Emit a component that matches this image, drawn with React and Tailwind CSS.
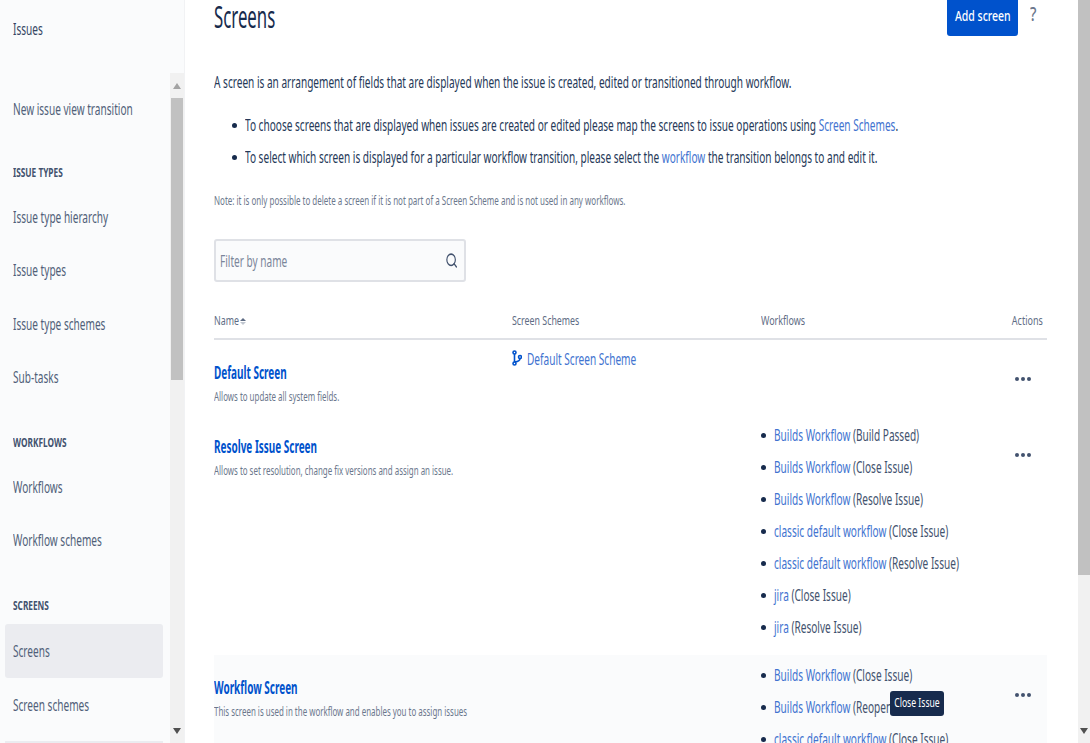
import { Search } from "lucide-react";

const FONT = "font-['Noto_Sans','Open_Sans',sans-serif]";
const COLS = "grid grid-cols-[298px_249px_minmax(0,1fr)_40px]";

// the reference text is tall and narrow, so every line is squeezed horizontally
function Squeezed({ children, className = "scale-x-[.63]" }) {
  return <span className={`inline-block origin-left whitespace-nowrap ${className}`}>{children}</span>;
}

function NavItem({ label, active, height = "h-[53.5px]" }) {
  return (
    <div className={`mx-[5px] w-[158px] px-2 flex items-center rounded-[3px] text-[16px] text-[#505f79] ${height} ${active ? "bg-[#ebecf0]" : ""}`}>
      <Squeezed>{label}</Squeezed>
    </div>
  );
}

function NavHeading({ label, className }) {
  return (
    <div className={`px-[13px] flex items-end text-[12px] font-bold leading-[18px] text-[#42526e] ${className}`}>
      <Squeezed className="scale-x-[.69]">{label}</Squeezed>
    </div>
  );
}

function Sidebar() {
  return (
    <aside className="w-[185px] shrink-0 h-full bg-[#fafbfc] border-r border-[#f1f2f4] flex flex-col">
      <div className="h-[73px] shrink-0 px-[13px] pt-[18px] text-[16px] leading-[22px] text-[#344563]">
        <Squeezed>Issues</Squeezed>
      </div>
      <div className="flex-1 min-h-0 flex">
        <div className="w-[170px] pt-[9px] overflow-hidden">
          <NavItem label="New issue view transition" height="h-[54px]" />
          <NavHeading label="ISSUE TYPES" className="h-[54px] pb-[8px]" />
          <NavItem label="Issue type hierarchy" />
          <NavItem label="Issue types" />
          <NavItem label="Issue type schemes" />
          <NavItem label="Sub-tasks" />
          <NavHeading label="WORKFLOWS" className="h-[56px] pb-[8px]" />
          <NavItem label="Workflows" />
          <NavItem label="Workflow schemes" />
          <NavHeading label="SCREENS" className="h-[57px] pb-[9px]" />
          <NavItem label="Screens" active height="h-[54px]" />
          <NavItem label="Screen schemes" height="h-[53px]" />
          <div className="mx-[5px] mt-[10px] h-[3px] w-[158px] bg-[#ebecf0]" />
        </div>
        <div className="w-[14px] shrink-0 bg-[#f1f1f1] flex flex-col items-center">
          <div className="h-[25px] shrink-0 flex items-center justify-center">
            <div className="w-0 h-0 border-x-[4px] border-x-transparent border-b-[6px] border-b-[#a3a3a3]" />
          </div>
          <div className="w-[12px] h-[282px] bg-[#c1c1c1]" />
          <div className="flex-1" />
          <div className="h-[25px] shrink-0 flex items-center justify-center">
            <div className="w-0 h-0 border-x-[4px] border-x-transparent border-t-[6px] border-t-[#505050]" />
          </div>
        </div>
      </div>
    </aside>
  );
}

function Link({ children }) {
  return <span className="text-[#4173d0]">{children}</span>;
}

function Bullet() {
  return <div className="w-[5px] h-[5px] rounded-full bg-[#172b4d] shrink-0" />;
}

function WorkflowItem({ name, transition }) {
  return (
    <div className="h-[32px] flex items-center gap-[8px] text-[16px] text-[#42526e]">
      <Bullet />
      <Squeezed>
        <Link>{name}</Link> ({transition})
      </Squeezed>
    </div>
  );
}

function RowDots() {
  return (
    <div className="flex gap-[2px] justify-end pr-[16px]">
      <div className="w-[4px] h-[4px] rounded-full bg-[#42526e]" />
      <div className="w-[4px] h-[4px] rounded-full bg-[#42526e]" />
      <div className="w-[4px] h-[4px] rounded-full bg-[#42526e]" />
    </div>
  );
}

function ScreenTitle({ title, desc }) {
  return (
    <>
      <div className="text-[17px] leading-[22px] font-bold text-[#0052cc]">
        <Squeezed className="scale-x-[.586]">{title}</Squeezed>
      </div>
      <div className="mt-[3px] text-[13px] leading-[18px] text-[#6b778c]">
        <Squeezed className="scale-x-[.61]">{desc}</Squeezed>
      </div>
    </>
  );
}

function SchemeIcon() {
  return (
    <svg width="10" height="16" viewBox="0 0 10 16" fill="none" stroke="#0052cc" strokeWidth="1.6">
      <circle cx="2.5" cy="2.5" r="1.5" />
      <circle cx="2.5" cy="13.5" r="1.5" />
      <circle cx="8" cy="7" r="1.5" />
      <path d="M2.5 4v8M8 8.5c0 2-2 3-5 3.5" />
    </svg>
  );
}

export default function App() {
  return (
    <div className={`relative flex h-[743px] w-[1090px] overflow-hidden bg-white ${FONT}`}>
      <Sidebar />

      <main className="relative flex-1 min-w-0 pl-[29px] pr-[31px] overflow-hidden">
        <div className="flex justify-between h-[36px]">
          <h1 className="text-[30px] leading-[34px] text-[#172b4d]">
            <Squeezed className="scale-x-[.56]">Screens</Squeezed>
          </h1>
          <div className="flex mr-[9px] gap-[12px]">
            <div className="w-[71px] h-[36px] pb-[5px] bg-[#0052cc] rounded-b-[3px] flex items-center justify-center text-[15px] font-medium text-white">
              <span className="inline-block scale-x-[.7] whitespace-nowrap">Add screen</span>
            </div>
            <div className="w-[8px] h-[28px] text-[20px] font-medium text-[#6b778c] flex items-center">
              <Squeezed className="scale-x-[.72]">?</Squeezed>
            </div>
          </div>
        </div>

        <p className="mt-[35px] h-[22px] text-[16px] leading-[22px] text-[#253858]">
          <Squeezed>A screen is an arrangement of fields that are displayed when the issue is created, edited or transitioned through workflow.</Squeezed>
        </p>

        <div className="mt-[16px] pl-[18px] text-[16px] text-[#253858]">
          <div className="h-[32px] flex items-center gap-[8px]">
            <Bullet />
            <Squeezed>
              To choose screens that are displayed when issues are created or edited please map the screens to issue operations using <Link>Screen Schemes</Link>.
            </Squeezed>
          </div>
          <div className="h-[32px] flex items-center gap-[8px]">
            <Bullet />
            <Squeezed>
              To select which screen is displayed for a particular workflow transition, please select the <Link>workflow</Link> the transition belongs to and edit it.
            </Squeezed>
          </div>
        </div>

        <p className="mt-[18px] h-[18px] text-[13px] leading-[18px] text-[#6b778c]">
          <Squeezed className="scale-x-[.615]">Note: it is only possible to delete a screen if it is not part of a Screen Scheme and is not used in any workflows.</Squeezed>
        </p>

        <div className="mt-[30px] w-[252px] h-[43px] bg-[#fafbfc] border-2 border-[#dfe1e6] rounded-[3px] flex items-center justify-between pl-[4px] pr-[6px] text-[16px] text-[#7a869a]">
          <Squeezed>Filter by name</Squeezed>
          <Search size={17} strokeWidth={2.2} className="text-[#42526e] shrink-0 origin-right scale-x-[.75]" />
        </div>

        <div className={`mt-[28px] h-[30px] ${COLS} items-center border-b-2 border-[#dfe1e6] pb-[6px] text-[13px] text-[#5e6c84]`}>
          <div className="flex items-center">
            <div className="w-[26px]">
              <Squeezed className="scale-x-[.68]">Name</Squeezed>
            </div>
            <div className="flex flex-col gap-[1px]">
              <div className="w-0 h-0 border-x-[3px] border-x-transparent border-b-[3px] border-b-[#5e6c84]" />
              <div className="w-0 h-0 border-x-[3px] border-x-transparent border-t-[3px] border-t-[#c1c7d0]" />
            </div>
          </div>
          <Squeezed className="scale-x-[.68]">Screen Schemes</Squeezed>
          <Squeezed className="scale-x-[.69]">Workflows</Squeezed>
          <div className="flex justify-end pr-[4px]">
            <span className="inline-block origin-right scale-x-[.69] whitespace-nowrap">Actions</span>
          </div>
        </div>

        <div className={`h-[75px] ${COLS}`}>
          <div className="pt-[22px]">
            <ScreenTitle title="Default Screen" desc="Allows to update all system fields." />
          </div>
          <div className="pt-[8px] flex items-start gap-[5px] text-[16px] leading-[22px]">
            <div className="pt-[2px]"><SchemeIcon /></div>
            <Squeezed><Link>Default Screen Scheme</Link></Squeezed>
          </div>
          <div />
          <div className="pt-[37px]"><RowDots /></div>
        </div>

        <div className={`h-[240px] ${COLS}`}>
          <div className="pt-[21px]">
            <ScreenTitle title="Resolve Issue Screen" desc="Allows to set resolution, change fix versions and assign an issue." />
          </div>
          <div />
          <div className="pt-[4px]">
            <WorkflowItem name="Builds Workflow" transition="Build Passed" />
            <WorkflowItem name="Builds Workflow" transition="Close Issue" />
            <WorkflowItem name="Builds Workflow" transition="Resolve Issue" />
            <WorkflowItem name="classic default workflow" transition="Close Issue" />
            <WorkflowItem name="classic default workflow" transition="Resolve Issue" />
            <WorkflowItem name="jira" transition="Close Issue" />
            <WorkflowItem name="jira" transition="Resolve Issue" />
          </div>
          <div className="pt-[38px]"><RowDots /></div>
        </div>

        <div className={`h-[120px] bg-[#fafbfc] ${COLS}`}>
          <div className="pt-[22px]">
            <ScreenTitle title="Workflow Screen" desc="This screen is used in the workflow and enables you to assign issues" />
          </div>
          <div />
          <div className="pt-[4px]">
            <WorkflowItem name="Builds Workflow" transition="Close Issue" />
            <WorkflowItem name="Builds Workflow" transition="Reopen Issue" />
            <WorkflowItem name="classic default workflow" transition="Close Issue" />
          </div>
          <div className="pt-[38px]"><RowDots /></div>
        </div>

        <div className="absolute left-[705px] top-[691px] w-[54px] h-[25px] rounded-[3px] bg-[#172b4d] flex items-center justify-center text-[12.5px] text-white">
          <span className="inline-block scale-x-[.69] whitespace-nowrap">Close Issue</span>
        </div>
      </main>

      <div className="w-[12px] shrink-0 bg-[#f1f1f1] flex flex-col items-center">
        <div className="w-full h-[575px] bg-[#c1c1c1]" />
        <div className="flex-1" />
        <div className="h-[25px] shrink-0 flex items-center justify-center">
          <div className="w-0 h-0 border-x-[4px] border-x-transparent border-t-[6px] border-t-[#505050]" />
        </div>
      </div>
    </div>
  );
}
